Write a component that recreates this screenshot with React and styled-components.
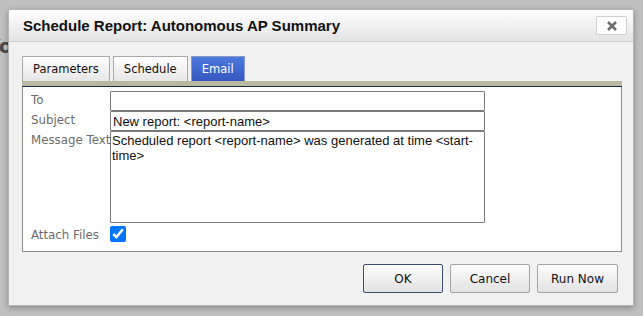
import React from 'react';
import styled, { createGlobalStyle, css } from 'styled-components';

const GlobalStyle = createGlobalStyle`
  html, body {
    margin: 0;
    padding: 0;
    background: #c0c0c0;
    overflow: hidden;
  }
  #root {
    position: relative;
    width: 643px;
    height: 316px;
  }
`;

const PageTitle = styled.h1`
  margin: 0;
  padding: 34px 0 0 0;
  margin-left: -14px;
  font-family: "DejaVu Sans", sans-serif;
  font-size: 20px;
  font-weight: bold;
  color: #4a4a4a;
`;

const Dialog = styled.div`
  position: absolute;
  left: 8px;
  top: 9px;
  width: 626px;
  height: 297px;
  box-sizing: border-box;
  display: flex;
  flex-direction: column;
  background: #f1f1f1;
  border: 1px solid #b4b4b4;
  box-shadow: 0 2px 6px rgba(0, 0, 0, 0.3);
`;

const TitleBar = styled.div`
  height: 31px;
  flex: none;
  display: flex;
  align-items: center;
  justify-content: space-between;
  padding: 0 6px 0 14px;
  background: linear-gradient(#fefefe, #e4e4e4);
  border-bottom: 1px solid #cfcfcf;
`;

const Title = styled.div`
  font-family: "Liberation Sans", Arial, sans-serif;
  font-size: 15px;
  font-weight: bold;
  color: #111;
`;

const CloseButton = styled.button`
  width: 31px;
  height: 19px;
  padding: 0;
  display: flex;
  align-items: center;
  justify-content: center;
  background: #fff;
  border: 1px solid #cfcfcf;
  border-radius: 1px;
`;

const Body = styled.div`
  flex: 1;
  display: flex;
  flex-direction: column;
  padding: 14px 11px 0 13px;
`;

const TabRow = styled.div`
  display: flex;
  gap: 3px;
  height: 25px;
`;

const Tab = styled.div`
  box-sizing: border-box;
  height: 25px;
  padding: 0 10px;
  display: flex;
  align-items: center;
  font-family: "DejaVu Sans", Tahoma, sans-serif;
  font-size: 11.5px;
  color: #111;
  border: 1px solid #a9a9a9;
  border-bottom: none;
  background: linear-gradient(#ffffff, #e6e6e6);
  ${props =>
    props.active &&
    css`
      color: #fff;
      border-color: #8a9ac8;
      background: linear-gradient(#4d79dd, #3457c0);
    `}
`;

const TabBar = styled.div`
  height: 5px;
  background: #b9b9a1;
  border-bottom: 1px solid #1e2a4a;
`;

const Panel = styled.div`
  background: #fff;
  border: 1px solid #8c8c8c;
  border-top: none;
  padding: 4px 0 7px 8px;
  display: grid;
  grid-template-columns: 79px 375px;
  align-items: start;
`;

const Label = styled.div`
  font-family: "DejaVu Sans", Tahoma, sans-serif;
  font-size: 11.8px;
  color: #6b6b6b;
  line-height: 18px;
  padding-top: ${props => props.pt || 0}px;
  white-space: nowrap;
`;

const fieldBase = css`
  box-sizing: border-box;
  width: 375px;
  margin: 0;
  border: 1px solid #7a7a7a;
  border-radius: 1px;
  font-family: "Liberation Sans", Arial, sans-serif;
  font-size: 13px;
  color: #111;
  background: #fff;
  outline: none;
`;

const TextInput = styled.input`
  ${fieldBase}
  height: 20px;
  padding: 1px 2px;
`;

const TextArea = styled.textarea`
  ${fieldBase}
  height: 92px;
  padding: 1px 1px;
  line-height: 15px;
  resize: none;
  overflow: hidden;
`;

const Check = styled.input`
  width: 16px;
  height: 16px;
  margin: 3px 0 0 0;
  accent-color: #0075ff;
`;

const Footer = styled.div`
  display: flex;
  justify-content: flex-end;
  gap: 7px;
  padding: 12px 4px 0 0;
`;

const Button = styled.button`
  box-sizing: border-box;
  width: ${props => props.w || 80}px;
  height: 29px;
  font-family: "DejaVu Sans", Tahoma, sans-serif;
  font-size: 12px;
  color: #111;
  background: linear-gradient(#fdfdfd, #e2e2e2);
  border: 1px solid ${props => (props.primary ? '#3d4c6e' : '#a3a3a3')};
  border-radius: 2px;
`;

export default function App() {
  return (
    <>
      <GlobalStyle />
      <PageTitle>You</PageTitle>
      <Dialog>
        <TitleBar>
          <Title>Schedule Report: Autonomous AP Summary</Title>
          <CloseButton>
            <svg width="12" height="12" viewBox="0 0 12 12">
              <path d="M2 2 L10 10 M10 2 L2 10" stroke="#6d6d6d" strokeWidth="2.6" />
            </svg>
          </CloseButton>
        </TitleBar>
        <Body>
          <TabRow>
            <Tab>Parameters</Tab>
            <Tab>Schedule</Tab>
            <Tab active>Email</Tab>
          </TabRow>
          <TabBar />
          <Panel>
            <Label>To</Label>
            <TextInput defaultValue="" />
            <Label>Subject</Label>
            <TextInput defaultValue="New report: <report-name>" />
            <Label>Message Text</Label>
            <TextArea defaultValue="Scheduled report <report-name> was generated at time <start-time>" />
            <Label pt={3}>Attach Files</Label>
            <Check type="checkbox" defaultChecked />
          </Panel>
          <Footer>
            <Button primary>OK</Button>
            <Button>Cancel</Button>
            <Button w={81}>Run Now</Button>
          </Footer>
        </Body>
      </Dialog>
    </>
  );
}
